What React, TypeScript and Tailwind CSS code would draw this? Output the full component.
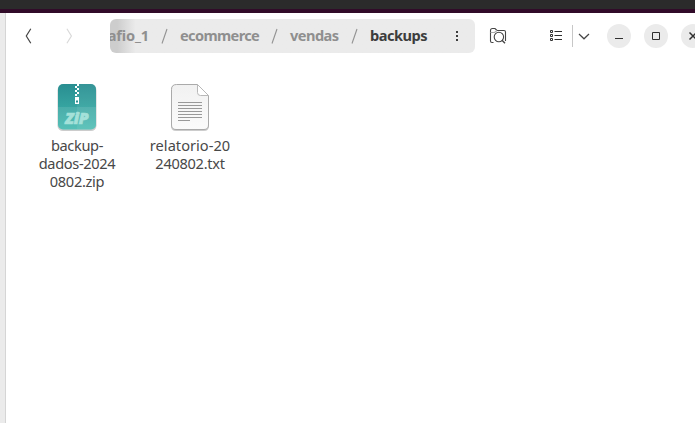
import type { ReactNode } from "react";

function Slash() {
  return (
    <svg className="h-[34px] w-[31px] shrink-0" viewBox="0 0 31 34" fill="none">
      <path d="M13 24.5 L18 10" stroke="#929292" strokeWidth="1.1" />
    </svg>
  );
}

function Crumb({ children, className }: { children: ReactNode; className: string }) {
  return (
    <span className={`flex h-[34px] shrink-0 items-center whitespace-nowrap ${className}`}>
      {children}
    </span>
  );
}

function PathBar() {
  return (
    <nav className="ml-6 flex h-[34px] w-[365px] shrink-0 items-center overflow-hidden rounded-[6px] bg-linear-to-r from-[#cdcdcd] from-[2%] to-[#ebebeb] to-[7%] text-[14.6px] font-bold text-[#8f8f8f]">
      <Crumb className="w-[39px] justify-end tracking-[-0.15px]">afio_1</Crumb>
      <Slash />
      <Crumb className="w-[79px] tracking-[-0.65px]">ecommerce</Crumb>
      <Slash />
      <Crumb className="w-[49px] tracking-[-0.55px]">vendas</Crumb>
      <Slash />
      <Crumb className="w-[60px] tracking-[-0.5px] text-[#3d3d3d]">backups</Crumb>
      <svg className="ml-[19px] h-[34px] w-4" viewBox="0 0 16 34" fill="#3d3d3d">
        <path d="M7 12h2v2H7zM7 16h2v2H7zM7 20h2v2H7z" />
      </svg>
    </nav>
  );
}

function WindowButton({ children }: { children: ReactNode }) {
  return (
    <button className="flex size-6 shrink-0 items-center justify-center rounded-full bg-[#ebebeb]">
      <svg className="size-4" viewBox="0 0 16 16" fill="none" stroke="#303030">
        {children}
      </svg>
    </button>
  );
}

function Header() {
  return (
    <header className="flex h-[46px] w-[740px] shrink-0 items-center">
      <button className="ml-[14px] flex size-4 items-center">
        <svg className="size-4" viewBox="0 0 16 16" fill="none">
          <path d="M10.8 .8 L6.3 8 L10.8 15.2" stroke="#454545" strokeWidth="1.2" />
        </svg>
      </button>
      <button className="ml-6 mr-1 flex size-4 items-center">
        <svg className="size-4" viewBox="0 0 16 16" fill="none">
          <path d="M6.9 .8 L11.4 8 L6.9 15.2" stroke="#d9d9d9" strokeWidth="1.2" />
        </svg>
      </button>
      <div className="w-[6px]" />
      <PathBar />
      <svg className="ml-[14px] h-[18px] w-[19px] shrink-0" viewBox="0 0 19 18" fill="none" stroke="#454545" strokeWidth="1.1">
        <path d="M4.5 15.5H3Q1.5 15.5 1.5 14V3.5Q1.5 1.5 3.5 1.5H6L8 3.5H15Q16.5 3.5 16.5 5V14" />
        <path d="M1.5 5.5H5.5L8 3.5" stroke="#aaaaaa" />
        <circle cx="9.9" cy="10" r="4.7" />
        <path d="M13 13.3L16 16.2" strokeWidth="1.5" />
      </svg>
      <svg className="ml-[41px] h-4 w-4 shrink-0" viewBox="0 0 16 16" fill="none" stroke="#303030">
        <path d="M1.5 2.5h2v2h-2zM1.5 6.5h2v2h-2zM1.5 10.5h2v2h-2zM5.5 3.5H13M5.5 7.5H13M5.5 11.5H13" />
      </svg>
      <div className="ml-[7px] h-[22px] w-px shrink-0 bg-[#c7c7c7]" />
      <svg className="ml-[3px] h-4 w-4 shrink-0" viewBox="0 0 16 16" fill="none" stroke="#454545" strokeWidth="1.2">
        <path d="M3 6L8 10.8L13 6" />
      </svg>
      <div className="ml-[15px] flex gap-[13px]">
        <WindowButton><path d="M4 10.5H12" /></WindowButton>
        <WindowButton><path d="M4.5 4.5H11.5V11.5H4.5Z" /></WindowButton>
        <WindowButton><path d="M4.5 4.5L11.5 11.5M11.5 4.5L4.5 11.5" strokeWidth="1.5" /></WindowButton>
      </div>
    </header>
  );
}

function ZipIcon() {
  return (
    <svg className="h-[50px] w-[42px]" viewBox="0 0 42 50">
      <defs>
        <linearGradient id="zip" x2="0" y2="1">
          <stop stopColor="#298e91" /><stop offset="1" stopColor="#43bab0" />
        </linearGradient>
        <clipPath id="zipbody"><rect x="2" y="2" width="38" height="45.5" rx="5" /></clipPath>
      </defs>
      <rect x="1.5" y="3" width="39" height="46" rx="5.5" fill="#999999" opacity=".5" />
      <g clipPath="url(#zipbody)">
        <path fill="url(#zip)" d="M2 2h38v46H2z" />
        <path fill="#fff" opacity=".06" d="M21 2h19v46H21z" />
        <path fill="#fff" opacity=".1" d="M2 25h38v23H2z" />
      </g>
      <path fill="#fff" d="M21 2h2v2h-2zM19 4h2v2h-2zM21 6h2v2h-2zM19 8h2v2h-2zM21 10h2v2h-2zM19 12h2v2h-2zM19 15h4v7h-4z" />
      <path fill="#298e91" d="M20 18.5h2v2h-2z" />
      <text x="9.2" y="42" textLength="23.5" lengthAdjust="spacingAndGlyphs" fill="#a4e1d9" stroke="#a4e1d9" strokeWidth=".7" className="font-['Open_Sans',sans-serif] text-[16px] font-extrabold italic">ZiP</text>
    </svg>
  );
}

function TextIcon() {
  return (
    <svg className="h-[50px] w-[42px]" viewBox="0 0 42 50" fill="none">
      <defs>
        <linearGradient id="paper" x2="0" y2="1">
          <stop stopColor="#f1f1f1" /><stop offset="1" stopColor="#fbfbfb" />
        </linearGradient>
      </defs>
      <path d="M7 3H28L40 14V44Q40 49 35 49H7Q2 49 2 44V8Q2 3 7 3Z" fill="#aaaaaa" opacity=".6" />
      <path d="M7.5 2.5H28.5L39.5 13.5V43Q39.5 47.5 35 47.5H7Q2.5 47.5 2.5 43V7.5Q2.5 2.5 7.5 2.5Z" fill="url(#paper)" stroke="#aaaaaa" />
      <path d="M28.5 2.5V10.5Q28.5 13.5 31.5 13.5H39.5Z" fill="#fff" stroke="#b8b8b8" />
      <path d="M9 20.5H33M9 23.5H33M9 26.5H33M9 29.5H33M9 32.5H33M9 35.5H33M9 38.5H21" stroke="#999999" />
    </svg>
  );
}

function FileItem({ icon, children }: { icon: ReactNode; children: ReactNode }) {
  return (
    <figure className="flex w-[97px] flex-col items-center">
      {icon}
      <figcaption className="mt-1 flex flex-col items-center whitespace-nowrap pl-px text-[14.6px] leading-[18px] text-[#484848]">
        {children}
      </figcaption>
    </figure>
  );
}

export default function App() {
  return (
    <div className="flex h-[423px] w-[695px] flex-col overflow-hidden bg-white font-['Noto_Sans',sans-serif]">
      <div className="h-[13px] shrink-0 border-b-4 border-[#310b29] bg-[#2b2b2b]" />
      <div className="flex min-h-0 flex-1">
        <aside className="w-[6px] shrink-0 border-r border-[#d5d5d5] bg-[#ebebeb]" />
        <div className="flex min-w-0 flex-1 flex-col overflow-hidden">
          <Header />
          <main className="flex gap-4 pl-[22px] pt-[23px]">
            <FileItem icon={<ZipIcon />}>
              <span className="tracking-[-0.35px]">backup-</span>
              <span className="tracking-[-0.35px]">dados-2024</span>
              <span className="tracking-[-0.3px]">0802.zip</span>
            </FileItem>
            <FileItem icon={<TextIcon />}>
              <span className="tracking-[0.02px]">relatorio-20</span>
              <span className="tracking-[-0.3px]">240802.txt</span>
            </FileItem>
          </main>
        </div>
      </div>
    </div>
  );
}
